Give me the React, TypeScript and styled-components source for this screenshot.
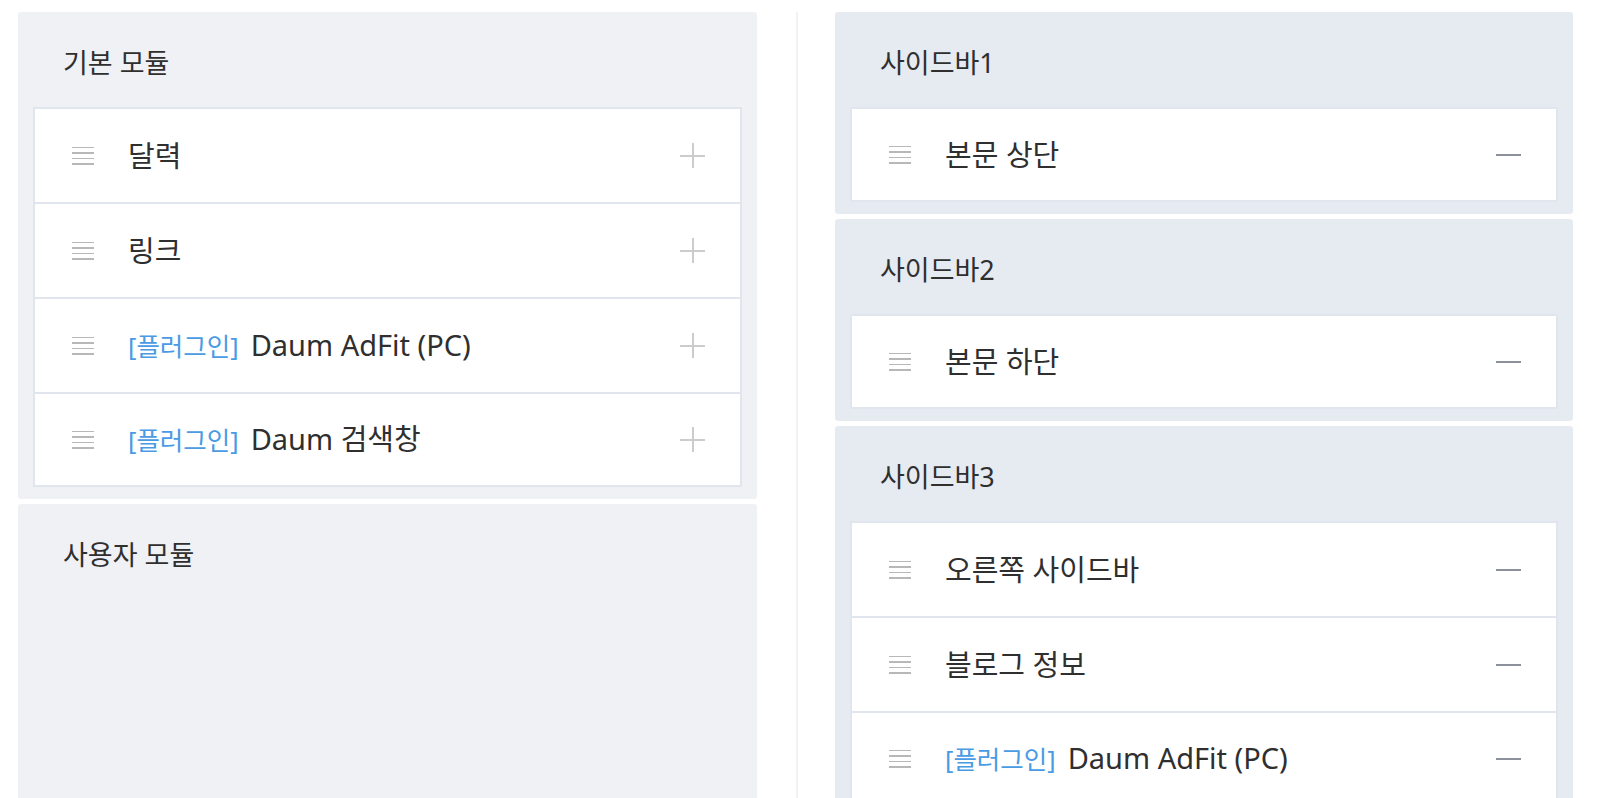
import React from "react";
import styled, { createGlobalStyle } from "styled-components";

type Mode = "add" | "remove";

interface IModule {
  name: string;
  plugin?: boolean;
}

interface IGroup {
  title: string;
  items: IModule[];
}

const colors = {
  text: "#2f2f2f",
  plugin: "#4a9be4",
  leftPanel: "#f0f1f5",
  rightPanel: "#e6eaf1",
  border: "#e1e5ee",
  divider: "#f2f2f2",
  handle: "#b8b8b8",
  plus: "#cccccc",
  minus: "#8b909b",
};

const GlobalStyle = createGlobalStyle`
  html, body {
    margin: 0;
    padding: 0;
    background: #fff;
    overflow: hidden;
  }
  body {
    font-family: "Noto Sans", "Noto Sans CJK KR", sans-serif;
    color: ${colors.text};
  }
`;

const Page = styled.div`
  display: flex;
  align-items: stretch;
  height: 798px;
  padding: 12px 0 0 18px;
  box-sizing: border-box;
`;

const Column = styled.div<{ $width: number }>`
  width: ${(p) => p.$width}px;
  display: flex;
  flex-direction: column;
  gap: 5px;
`;

const Divider = styled.div`
  width: 2px;
  background: ${colors.divider};
  margin: 0 37px 0 39px;
`;

const Panel = styled.section<{ $side: "left" | "right"; $grow?: boolean }>`
  background: ${(p) => (p.$side === "left" ? colors.leftPanel : colors.rightPanel)};
  border-radius: 3px;
  padding: 0 15px 12px;
  flex: ${(p) => (p.$grow ? "1 0 auto" : "0 0 auto")};
  min-height: ${(p) => (p.$grow ? "400px" : "0")};
`;

const PanelTitle = styled.h2`
  margin: 0;
  height: 95px;
  box-sizing: border-box;
  padding: 34px 0 0 30px;
  font-size: 27px;
  line-height: 34px;
  font-weight: 400;
  color: ${colors.text};
`;

const Row = styled.div`
  display: flex;
  align-items: center;
  height: 95px;
  box-sizing: border-box;
  background: #fff;
  border: 2px solid ${colors.border};
  border-bottom: none;
  padding: 0 35px 0 37px;

  &:last-child {
    border-bottom: 2px solid ${colors.border};
  }
`;

const Handle = styled.span`
  width: 22px;
  height: 18px;
  display: flex;
  flex-direction: column;
  justify-content: space-between;
  margin-right: 34px;
  flex-shrink: 0;

  i {
    display: block;
    height: 1.5px;
    background: ${colors.handle};
  }
`;

const Label = styled.span`
  flex: 1;
  font-size: 29px;
  line-height: 38px;
  color: ${colors.text};
  white-space: nowrap;
`;

const Plugin = styled.span`
  color: ${colors.plugin};
  font-size: 25.5px;
  margin-right: 12px;
`;

const Action = styled.span<{ $mode: Mode }>`
  position: relative;
  width: 25px;
  height: 25px;
  flex-shrink: 0;

  &::before {
    content: "";
    position: absolute;
    left: 0;
    right: 0;
    top: 12px;
    height: ${(p) => (p.$mode === "add" ? "1.5px" : "2px")};
    background: ${(p) => (p.$mode === "add" ? colors.plus : colors.minus)};
  }

  &::after {
    content: "";
    display: ${(p) => (p.$mode === "add" ? "block" : "none")};
    position: absolute;
    top: 0;
    bottom: 0;
    left: 12px;
    width: 1.5px;
    background: ${colors.plus};
  }
`;

const basic: IModule[] = [
  { name: "달력" },
  { name: "링크" },
  { name: "Daum AdFit (PC)", plugin: true },
  { name: "Daum 검색창", plugin: true },
];

const sidebars: IGroup[] = [
  { title: "사이드바1", items: [{ name: "본문 상단" }] },
  { title: "사이드바2", items: [{ name: "본문 하단" }] },
  {
    title: "사이드바3",
    items: [
      { name: "오른쪽 사이드바" },
      { name: "블로그 정보" },
      { name: "Daum AdFit (PC)", plugin: true },
    ],
  },
];

const ModuleRow = ({ item, mode }: { item: IModule; mode: Mode }) => (
  <Row>
    <Handle>
      <i />
      <i />
      <i />
      <i />
    </Handle>
    <Label>
      {item.plugin && <Plugin>[플러그인]</Plugin>}
      {item.name}
    </Label>
    <Action $mode={mode} />
  </Row>
);

const App = () => {
  return (
    <>
      <GlobalStyle />
      <Page>
        <Column $width={739}>
          <Panel $side="left">
            <PanelTitle>기본 모듈</PanelTitle>
            <div>
              {basic.map((m, i) => (
                <ModuleRow key={i} item={m} mode="add" />
              ))}
            </div>
          </Panel>
          <Panel $side="left" $grow>
            <PanelTitle>사용자 모듈</PanelTitle>
          </Panel>
        </Column>
        <Divider />
        <Column $width={738}>
          {sidebars.map((g, gi) => (
            <Panel key={gi} $side="right" $grow={gi === sidebars.length - 1}>
              <PanelTitle>{g.title}</PanelTitle>
              <div>
                {g.items.map((m, i) => (
                  <ModuleRow key={i} item={m} mode="remove" />
                ))}
              </div>
            </Panel>
          ))}
        </Column>
      </Page>
    </>
  );
};

export default App;
